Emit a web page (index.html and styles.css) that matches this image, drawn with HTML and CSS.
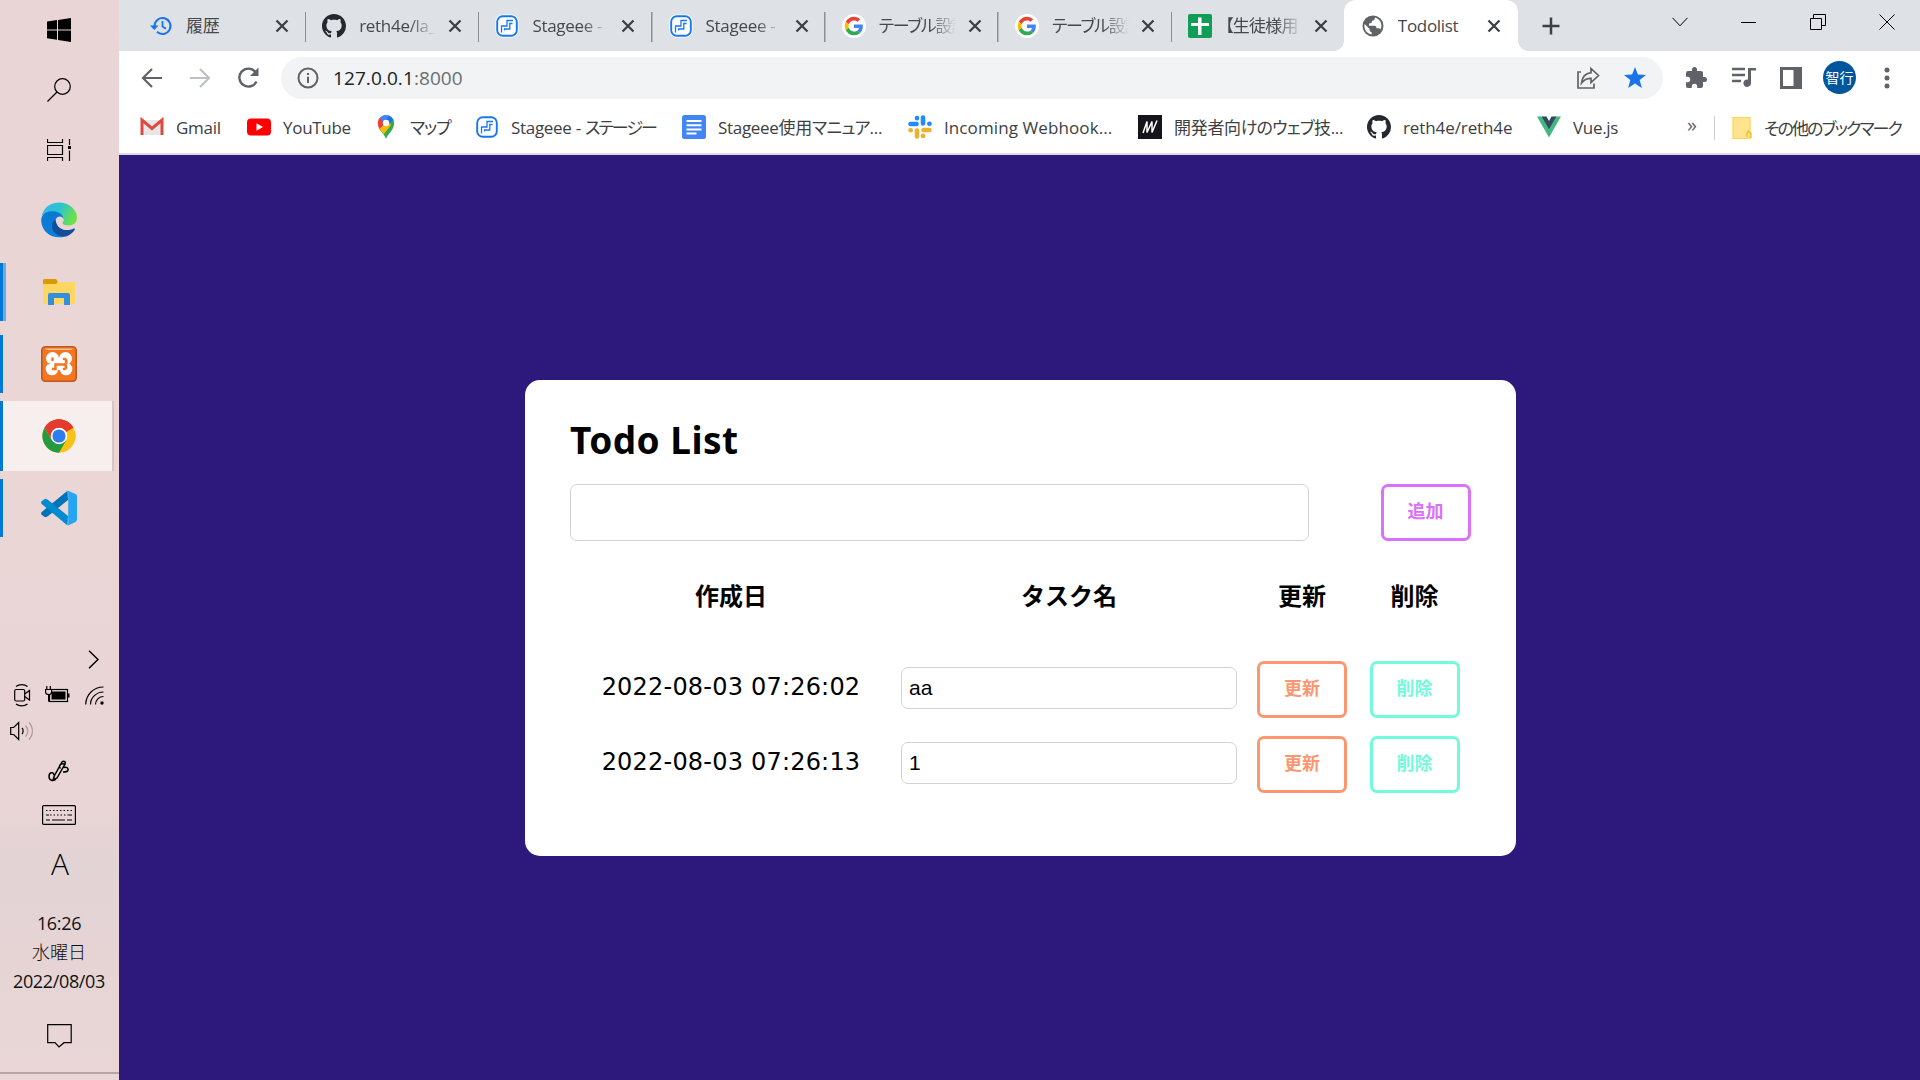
FILE: index.html
```html
<!DOCTYPE html>
<html lang="ja">
<head>
<meta charset="utf-8">
<title>Todolist</title>
<link rel="stylesheet" href="styles.css">
</head>
<body>
<svg class="defs" width="0" height="0">
  <symbol id="x" viewBox="0 0 14 14"><path d="M1.5 1.5l11 11M12.500 1.500l-11 11" stroke="#3c4043" stroke-width="2.300" fill="none"/></symbol>
  <symbol id="github" viewBox="0 0 16 16"><path fill="#24292f" d="M8 0C3.58 0 0 3.58 0 8c0 3.54 2.290 6.530 5.470 7.590.4.070.55-.17.55-.38 0-.19-.01-.82-.01-1.490-2.010.37-2.530-.49-2.690-.94-.09-.23-.48-.94-.82-1.130-.28-.15-.68-.52-.01-.53.63-.01 1.080.58 1.230.82.72 1.210 1.870.87 2.330.66.070-.52.28-.87.51-1.070-1.780-.2-3.640-.89-3.640-3.950 0-.87.31-1.590.82-2.150-.08-.2-.36-1.020.08-2.120 0 0 .67-.21 2.200.82.64-.18 1.320-.27 2-.27s1.360.09 2 .27c1.530-1.040 2.200-.82 2.200-.82.44 1.100.16 1.920.08 2.120.51.56.82 1.270.82 2.150 0 3.070-1.870 3.750-3.650 3.950.29.25.54.73.54 1.480 0 1.070-.01 1.930-.01 2.200 0 .21.15.46.55.38A8.010 8.010 0 0 0 16 8c0-4.420-3.580-8-8-8z"/></symbol>
  <symbol id="stageee" viewBox="0 0 24 24"><rect x=".5" y=".5" width="23" height="23" rx="7" fill="#fff"/><rect x="2.200" y="2.200" width="19.600" height="19.600" rx="5.500" fill="#fff" stroke="#1677f0" stroke-width="1.900"/><path d="M18 6.500h-6V12H6.500v6.500M17.500 9.500h-2.700V15H9.500v1.500" fill="none" stroke="#1677f0" stroke-width="1.300"/></symbol>
  <symbol id="google" viewBox="0 0 48 48"><circle cx="24" cy="24" r="24" fill="#fff"/><g transform="translate(5.500 5.500) scale(.77)"><path fill="#EA4335" d="M24 9.500c3.540 0 6.710 1.220 9.210 3.600l6.850-6.850C35.900 2.380 30.470 0 24 0 14.620 0 6.510 5.380 2.560 13.220l7.980 6.190C12.430 13.720 17.740 9.500 24 9.500z"/><path fill="#4285F4" d="M46.980 24.550c0-1.570-.15-3.090-.38-4.550H24v9.020h12.940c-.58 2.960-2.260 5.480-4.780 7.180l7.730 6c4.510-4.180 7.090-10.360 7.090-17.650z"/><path fill="#FBBC05" d="M10.530 28.590c-.48-1.450-.76-2.990-.76-4.590s.27-3.140.76-4.590l-7.980-6.190C.92 16.460 0 20.120 0 24s.92 7.540 2.560 10.780l7.970-6.190z"/><path fill="#34A853" d="M24 48c6.480 0 11.930-2.130 15.890-5.810l-7.730-6c-2.150 1.450-4.920 2.300-8.160 2.300-6.260 0-11.570-4.220-13.470-9.910l-7.980 6.190C6.510 42.620 14.620 48 24 48z"/></g></symbol>
</svg>

<div class="screen">
  <aside class="taskbar">
    <div class="sys"><svg width="24" height="24" viewBox="0 0 24 24"><path d="M0 3.500l10-1.400v9.300H0zM11 2l13-2v11.400H11zM0 12.400h10v9.300L0 20.300zM11 12.400h13V24l-13-2z"/></svg></div>
    <div class="sys"><svg width="24" height="24" viewBox="0 0 24 24" class="line"><circle cx="15.500" cy="8.500" r="7.800"/><path d="M10 14L.5 23.500"/></svg></div>
    <div class="sys"><svg width="24" height="22" viewBox="0 0 24 22" class="line"><path d="M.5 0v3.500h15V0M.5 6.500h15v9H.5zM.5 22v-3.500h15V22M22.500 0v6M22.500 11.500V22"/><path d="M21 7h3v3h-3z" fill="#000" stroke="none"/></svg></div>

    <div class="app first"><svg width="36" height="36" viewBox="0 0 36 36">
      <defs><linearGradient id="eg" x1="0" y1="0" x2="1" y2=".35"><stop offset=".1" stop-color="#35b5ef"/><stop offset=".55" stop-color="#2dc4cf"/><stop offset="1" stop-color="#6be04a"/></linearGradient><linearGradient id="eb" x1="0" y1="0" x2="0" y2="1"><stop offset="0" stop-color="#0c78cf"/><stop offset="1" stop-color="#0a7fde"/></linearGradient></defs>
      <path fill="url(#eg)" d="M.6 14C2.800 5.500 9.500.5 18 .5 28.500.5 36 8 36 15.500c0 5-3.500 8-8.500 8-4 0-6-1.300-6-2.500 0-.9 1.300-1.500 1.300-3.600 0-2-2-4.500-5-5C12 10 5 10 .6 14z"/>
      <path fill="url(#eb)" d="M.2 19C-.2 12 6 8.800 12 9.200c6 .3 10.500 4 10.700 7.800-1.500-3-6-4-8.200.8-2.500 6 1.500 14 9.500 16.700C12 38 .8 30.500.2 19z"/>
      <path fill="#0f4f9c" d="M14.600 17.500c-7 4-3.600 17 8.900 17.100 4.500-.5 8.500-4 10.300-7.200.4-.9-.4-1.200-1.100-.8-8.200 3.800-17.500.3-18.100-9.100z"/></svg></div>
    <div class="app run double"><svg width="34" height="28" viewBox="0 0 34 28"><path fill="#dc9a02" d="M2 1h12l2 3-2 3H1V2z"/><path fill="#ffd661" d="M1 6h13l2-2h15.500A1.500 1.500 0 0 1 33 5.500v19a1.500 1.500 0 0 1-1.500 1.500h-29A1.500 1.500 0 0 1 1 24.500z"/><path fill="#338fdc" d="M6 27V17a2 2 0 0 1 2-2h18a2 2 0 0 1 2 2v10h-6v-7H12v7z"/></svg></div>
    <div class="app run"><svg width="36" height="36" viewBox="0 0 36 36"><rect x=".8" y=".8" width="34.400" height="34.400" rx="3.500" fill="#f47622" stroke="#b95b20" stroke-width="1.600"/><path d="M4 2.500h28l-2 1.500H6z" fill="#ffc08c"/><g fill="#fff"><circle cx="11.500" cy="12.500" r="6.500"/><circle cx="24.500" cy="12.500" r="6.500"/><circle cx="11" cy="23" r="6.300"/><circle cx="25" cy="23" r="6.300"/><path d="M9 12h18v12H9z"/></g><path d="M11.500 12.500v1.500M12 23h2.500v-4.500h8.500c3 0 3.500-5.500 0-5.500M23 18.500c3 1 2.500 4.500 0 4.500" fill="none" stroke="#f47622" stroke-width="2.500" stroke-linecap="round"/><path d="M7 17.800h2" stroke="#f47622" stroke-width="1"/></svg></div>
    <div class="app run active"><svg width="34" height="34" viewBox="0 0 48 48"><circle cx="24" cy="24" r="23.500" fill="#fbc116"/><path fill="#e33b2e" d="M24 24L3.650 12.250A23.500 23.500 0 0 1 44.350 12.250z"/><path fill="#e33b2e" d="M24 12.250h20.350A23.500 23.500 0 0 0 3.650 12.250l10.170 17.600z"/><path fill="#249a41" d="M3.650 12.250A23.500 23.500 0 0 0 24 47.500l10.200-17.600L24 33 13.820 29.850z"/><circle cx="24" cy="24" r="11.700" fill="#fff"/><circle cx="24" cy="24" r="9.300" fill="#2f7ded"/></svg></div>
    <div class="app run"><svg width="36" height="36" viewBox="0 0 36 36"><path fill="#0072ba" d="M26.500.7L27 10 6.500 26.500 4 27.200.7 24.700c-.8-.8-.7-2 0-2.700z"/><path fill="#008bd0" d="M.7 11.300L4 8.800l2.500.6L27 26l-.5 9.500L.7 14c-.7-.7-.8-2 0-2.700z"/><path fill="#25a6f2" d="M26.500.5L34.500 4A2.600 2.600 0 0 1 36 6.500v23a2.600 2.600 0 0 1-1.500 2.400l-8 3.800c.5-.5.7-1 .7-2V2.500c0-.8-.2-1.500-.7-2z"/></svg></div>

    <div class="tray">
      <div class="chev"><svg width="11" height="19" viewBox="0 0 11 19" class="line mid"><path d="M1 .8l9 8.700-9 8.700"/></svg></div>
      <div class="trow">
        <svg width="17" height="24" viewBox="0 0 17 24" class="line"><rect x=".7" y="6.500" width="10" height="11.500" rx="1.500"/><path d="M10.700 11l4.800-3.500v9.500l-4.800-3.500M2 3.500c3-2.500 8.500-2.500 11.500 0M2 21c3 2.500 8.500 2.500 11.500 0"/></svg>
        <svg width="26" height="20" viewBox="0 0 26 20" class="line"><rect x="4.500" y="4.500" width="18" height="12"/><path d="M6.500 6.500h14v8h-14zM23 8.500h1.500v4H23z" fill="#000" stroke="none"/><path d="M.6 4.500h6V7c0 1.500-1 2.500-3 2.500S.6 8.500.6 7zM1.800 1v3M5.300 1v3M3.600 9.500v7" fill="#e8d4d5"/></svg>
        <svg width="19" height="19" viewBox="0 0 19 19" class="line"><path d="M.7 18.500C1 8.500 8.500 1 18.500 1M5.500 18.500C5.500 11.500 11.500 6 18.500 6M10.500 18.500c0-4.500 3.500-8 8-8"/><circle cx="17" cy="17" r="1.700" fill="#000" stroke="none"/></svg>
      </div>
      <div class="vol"><svg width="24" height="20" viewBox="0 0 24 20" class="line"><path d="M.7 6.500h3l5-5v17l-5-5h-3z"/><path d="M12 7c1.500 1.500 1.500 4.500 0 6"/><path d="M15.500 4.500c3 3 3 8 0 11M19 1.500c4.500 4.500 4.500 12.500 0 17" stroke="#a99a9b"/></svg></div>
      <div class="pen"><svg width="22" height="22" viewBox="0 0 22 22" class="line mid"><path d="M14 2c1.500-1.500 4-.5 3 2L9 18l-4 2 1.500-4.500zM6 15c-1-4-5-2.500-5 1.500s4 5 7 3M17.500 5c-4-3-8 1-5 3.500M15 12c4 0 5.500-1 5-3-.5-1.500-2-2-4.500-1.500"/></svg></div>
      <div class="kbd"><svg width="34" height="20" viewBox="0 0 34 20" class="line"><rect x=".6" y=".6" width="32.800" height="18.800" rx="1"/><path d="M4 5.500h26M8 10h19" stroke-dasharray="1.500 2"/><path d="M4 10h3M27 10h3M4 15h4M10 15h13M25 15h5"/></svg></div>
      <div class="ime">A</div>
      <div class="clock"><span>16:26</span><span class="day">水曜日</span><span>2022/08/03</span></div>
      <div class="note"><svg width="25" height="24" viewBox="0 0 25 24" class="line"><path d="M.7.700h23.500v18H17L12 23l-4-4.300H.7z"/></svg></div>
    </div>
  </aside>

  <main class="browser">
    <nav class="tabs">
      <div class="tab"><svg width="22" height="20" viewBox="0 0 22 20"><path d="M4.500 10a8 8 0 1 1 2.500 5.800" fill="none" stroke="#1a73e8" stroke-width="2"/><path d="M0 9.500h8.500L4.300 14z" fill="#1a73e8"/><path d="M12.500 5v5.500l3.500 2.200" fill="none" stroke="#1a73e8" stroke-width="1.800"/></svg><span class="name">履歴</span><svg class="x"><use href="#x"/></svg></div>
      <div class="tab"><svg width="24" height="24"><use href="#github"/></svg><span class="name fade">reth4e/la_</span><svg class="x"><use href="#x"/></svg></div>
      <div class="tab"><svg width="24" height="24"><use href="#stageee"/></svg><span class="name fade">Stageee -</span><svg class="x"><use href="#x"/></svg></div>
      <div class="tab"><svg width="24" height="24"><use href="#stageee"/></svg><span class="name fade">Stageee -</span><svg class="x"><use href="#x"/></svg></div>
      <div class="tab"><svg width="24" height="24"><use href="#google"/></svg><span class="name fade kana">テーブル設計</span><svg class="x"><use href="#x"/></svg></div>
      <div class="tab"><svg width="24" height="24"><use href="#google"/></svg><span class="name fade kana">テーブル設計</span><svg class="x"><use href="#x"/></svg></div>
      <div class="tab last"><svg width="24" height="24" viewBox="0 0 24 24"><rect width="24" height="24" rx="2" fill="#109d58"/><path d="M10 3.500h3.500V9H21v3h-7.500v9H10v-9H3V9h7z" fill="#fff"/></svg><span class="name fade paren">【生徒様用</span><svg class="x"><use href="#x"/></svg></div>
      <div class="tab current"><svg width="22" height="22" viewBox="0 0 22 22"><circle cx="11" cy="11" r="10.500" fill="#5f6368"/><path d="M13 2.500c-.2 2-.8 3-3 3.200L9.500 8 7 8.500v2.300h5.500c1.500 0 2 1.200 2 2.500h2.200c1 0 1.600.6 1.800 1.400C20.500 11 19.500 4.500 13 2.500zM2.600 9l5 5v1c0 1.200 1 2.200 2.100 2.200v2.300C5 19 1.500 14 2.600 9z" fill="#fff"/></svg><span class="name">Todolist</span><svg class="x"><use href="#x"/></svg></div>
      <div class="newtab"><svg width="18" height="18" viewBox="0 0 18 18"><path d="M9 .5v17M.5 9h17" stroke="#3c4043" stroke-width="2.500"/></svg></div>
      <div class="win">
        <svg width="16" height="10" viewBox="0 0 16 10" class="line thin"><path d="M.5.800l7.500 8 7.500-8"/></svg>
        <svg width="16" height="10" viewBox="0 0 16 10" class="line thin"><path d="M0 5.500h15"/></svg>
        <svg width="16" height="16" viewBox="0 0 16 16" class="line thin"><path d="M.5 4.500h11v11H.5zM3.500 4V.5h12v11H12"/></svg>
        <svg width="16" height="16" viewBox="0 0 16 16" class="line thin"><path d="M.5.500l15 15M15.500.500l-15 15"/></svg>
      </div>
    </nav>

    <div class="toolbar">
      <div class="nav">
        <svg width="24" height="24" viewBox="0 0 24 24" fill="none" stroke="#5f6368" stroke-width="2.200"><path d="M22 12H3.500M12 3l-9 9 9 9"/></svg>
        <svg width="24" height="24" viewBox="0 0 24 24" fill="none" stroke="#bdc0c4" stroke-width="2.200"><path d="M2 12h18.500M12 3l9 9-9 9"/></svg>
        <svg width="24" height="24" viewBox="0 0 24 24"><path d="M20.500 15.500a9 9 0 1 1-1.300-9.800" fill="none" stroke="#5f6368" stroke-width="2.400"/><path d="M22.500 1.500V10H14z" fill="#5f6368"/></svg>
      </div>
      <div class="omnibox">
        <svg width="22" height="22" viewBox="0 0 22 22"><circle cx="11" cy="11" r="9.500" fill="none" stroke="#5f6368" stroke-width="2"/><path d="M10 9.800h2V16h-2zM10 6h2v2h-2z" fill="#5f6368"/></svg>
        <span class="url">127.0.0.1<i>:8000</i></span>
        <svg class="share" width="24" height="24" viewBox="0 0 24 24" fill="none" stroke="#5f6368" stroke-width="1.700"><path d="M5 6H2v16h16v-4.500M15 2.500l7.500 7-7.500 7V12.300c-4 0-7 1.200-9.500 4.700.5-5.500 3.500-9.500 9.500-10.300z"/></svg>
        <svg width="24" height="24" viewBox="0 0 24 24"><path fill="#1a73e8" d="M12 1l2.900 7.600 8.100.4-6.300 5.100 2.100 7.900-6.800-4.400L5.200 22l2.100-7.900L1 9l8.100-.4z"/></svg>
      </div>
      <div class="tools">
        <svg width="24" height="24" viewBox="0 0 24 24"><path fill="#5f6368" d="M20.500 11H19V7a2 2 0 0 0-2-2h-4V3.500a2.500 2.500 0 0 0-5 0V5H4a2 2 0 0 0-2 2v3.800h1.500a2.700 2.700 0 0 1 0 5.400H2V20a2 2 0 0 0 2 2h3.800v-1.500a2.700 2.700 0 0 1 5.400 0V22H17a2 2 0 0 0 2-2v-4h1.500a2.500 2.500 0 0 0 0-5z"/></svg>
        <svg width="24" height="22" viewBox="0 0 24 22"><path d="M0 2h13M0 8h13M0 14h9" stroke="#5f6368" stroke-width="2.300"/><path d="M16 1h8v2.500h-5V16a3.800 3.800 0 1 1-3-3.500z" fill="#5f6368"/></svg>
        <svg width="22" height="22" viewBox="0 0 22 22"><path d="M0 0h22v22H0zM3 3v16h10.500V3z" fill="#5f6368" fill-rule="evenodd"/></svg>
        <span class="avatar">智行</span>
        <svg width="6" height="22" viewBox="0 0 6 22" fill="#5f6368"><circle cx="3" cy="3" r="2.500"/><circle cx="3" cy="11" r="2.500"/><circle cx="3" cy="19" r="2.500"/></svg>
      </div>
    </div>

    <div class="bookmarks">
      <div class="bm"><svg width="24" height="24" viewBox="0 0 24 24"><path d="M3 5h18v15H3z" fill="#e8e6e6"/><path d="M2 20V5l10 8.500L22 5v15" fill="none" stroke="#dd4b3e" stroke-width="3"/></svg><span>Gmail</span></div>
      <div class="bm"><svg width="24" height="24" viewBox="0 0 24 24"><rect y="3.500" width="24" height="17" rx="4" fill="#f00"/><path d="M9.500 8.300l6.500 3.700-6.500 3.700z" fill="#fff"/></svg><span>YouTube</span></div>
      <div class="bm"><svg width="24" height="24" viewBox="0 0 24 24"><path fill="#34a853" d="M12 24c1-4 8.200-9 8.200-16 0-1.500-.4-2.800-1-4L5.500 14.500C8 17.500 11 20.500 12 24z"/><path fill="#fbbc04" d="M5.500 14.500L14 5l3 5-7 9z"/><path fill="#ea4335" d="M3.800 8c0 2.300.6 4.300 1.900 6.300L13 6 5.800 2.800C4.500 4.200 3.800 6 3.800 8z"/><path fill="#4285f4" d="M5.800 2.700a8.200 8.200 0 0 1 8.500-2.400L9.500 7z"/><path fill="#1a73e8" d="M14.300.3a8 8 0 0 1 5 3.900L14.500 10 10 6z"/><circle cx="12" cy="8" r="3.200" fill="#fff"/></svg><span class="kana">マップ</span></div>
      <div class="bm"><svg width="24" height="24"><use href="#stageee"/></svg><span>Stageee - <b class="kana tight">ステージー</b></span></div>
      <div class="bm"><svg width="24" height="24" viewBox="0 0 24 24"><rect width="24" height="24" rx="2.500" fill="#4285f4"/><path d="M4.500 6h15M4.500 10.200h15M4.500 14.400h15M4.500 18.600h10" stroke="#fff" stroke-width="2"/></svg><span>Stageee使用<b class="kana wide">マニュア</b>...</span></div>
      <div class="bm"><svg width="24" height="24" viewBox="0 0 24 24" stroke-linecap="round" stroke-width="4.600"><path d="M2.500 9h6M9 3v.2M15 2.500v6M21.500 8.800h-.2" stroke="#1e8cff"/><path d="M15.500 15h6M15 21v-.2M9 15.500v6M2.500 15.200h.2" stroke="#ecb22e"/></svg><span class="hook">Incoming Webhook...</span></div>
      <div class="bm"><svg width="24" height="24" viewBox="0 0 24 24"><path fill="#15141a" d="M0 0h24v24H0z"/><path d="M5 18L9 6.500v11l5-11v11l5-12" fill="none" stroke="#fff" stroke-width="1.500"/></svg><span>開発者向<b class="kana wide">けのウェブ</b>技...</span></div>
      <div class="bm"><svg width="24" height="24"><use href="#github"/></svg><span class="gh">reth4e/reth4e</span></div>
      <div class="bm"><svg width="24" height="24" viewBox="0 0 24 24"><path fill="#41b883" d="M0 1.500h6L12 12l6-10.500h6L12 22.500z"/><path fill="#35495e" d="M4.700 1.500H9.500L12 6l2.500-4.500h4.800L12 14.200z"/></svg><span>Vue.js</span></div>
      <div class="more">»</div>
      <div class="bm other"><svg width="20" height="24" viewBox="0 0 20 24"><path d="M1 1.500h17v14l1 1.500v5h-2.500v.5H1z" fill="#ffe48d" stroke="#fdd24e" stroke-width="1.200"/><path d="M15 21v-4l1.500-2 2 2v5" fill="none" stroke="#f0be2d" stroke-width="1.500"/></svg><span class="kana tight">その他のブックマーク</span></div>
    </div>

    <section class="page">
      <div class="card">
        <h1>Todo List</h1>
        <div class="add"><input class="new" type="text"><button class="btn pink">追加</button></div>
        <div class="grid head"><span>作成日</span><span>タスク名</span><span>更新</span><span>削除</span></div>
        <div class="grid row"><time>2022-08-03 07:26:02</time><input type="text" value="aa"><button class="btn orange">更新</button><button class="btn mint">削除</button></div>
        <div class="grid row"><time>2022-08-03 07:26:13</time><input type="text" value="1"><button class="btn orange">更新</button><button class="btn mint">削除</button></div>
      </div>
    </section>
  </main>
</div>
</body>
</html>
```
FILE: styles.css
```css
* { box-sizing: border-box; }
body { margin: 0; overflow: hidden; font-family: "Open Sans", "Noto Sans CJK JP", sans-serif; }
.defs { position: absolute; }
svg { flex: none; display: block; }
.screen { display: flex; width: 1920px; height: 1080px; }
.line { fill: none; stroke: #000; stroke-width: 1.2; }
.line.mid { stroke-width: 1.5; }
.line.thin { stroke-width: 1; }

/* desktop taskbar */
.taskbar {
  width: 119px; flex: none; display: flex; flex-direction: column;
  background: linear-gradient(#ead5d6 0, #ebd6d6 45%, #e9d5d6 75%, #e2d3d4 80%, #e6d4d5 88%, #ead6d6 100%);
}
.sys { height: 60px; padding-left: 47px; display: flex; align-items: center; }
.app { height: 72px; width: 118px; display: flex; align-items: center; justify-content: center; }
.app.first { margin-top: 4px; }
.app.run { background: linear-gradient(#0078d7, #0078d7) 0 7px / 3px 58px no-repeat; }
.app.double { background: linear-gradient(90deg, #0078d7 3px, #66aee5 3px) 0 7px / 6px 58px no-repeat; }
.app.active {
  height: 70px; margin: 1px 0;
  background: linear-gradient(90deg, #0078d7 3px, #f7eeee 3px, #f7eeee 112px, #d9c3c5 112px, #d9c3c5 114px, transparent 114px);
}
.tray { margin-top: 106px; height: 424px; display: flex; flex-direction: column; border-bottom: 2px solid #b5a5a6; }
.chev { height: 19px; padding-left: 88px; }
.trow { display: flex; align-items: center; gap: 14px; padding-left: 14px; height: 24px; margin-top: 14px; }
.vol { padding-left: 10px; margin-top: 14px; }
.pen { padding-left: 48px; margin-top: 19px; }
.kbd { padding-left: 42px; margin-top: 23px; }
.ime { height: 40px; margin-top: 19px; padding-left: 1px; text-align: center; font: 300 30px/40px "Open Sans", sans-serif; }
.clock { display: flex; flex-direction: column; align-items: center; width: 118px; margin-top: 25px; font-size: 18px; line-height: 29px; letter-spacing: -.35px; color: #111; }
.day { font-weight: 300; letter-spacing: 0; }
.note { padding-left: 47px; margin-top: 28px; }

/* browser window */
.browser { flex: 1; min-width: 0; display: flex; flex-direction: column; background: #fff; }
.tabs { height: 51px; display: flex; background: #dee1e6; padding-left: 14px; }
.tab { width: 173.2px; flex: none; display: flex; align-items: center; padding: 1px 16px 0; background: linear-gradient(#8c9096, #8c9096) 100% 12px / 1.500px 30px no-repeat; }
.tab > svg:first-child { width: 24px; }
.tab.last { background: none; }
.name { width: 77px; margin-left: 13px; flex: none; overflow: hidden; white-space: nowrap; font-size: 17px; line-height: 30px; letter-spacing: -.3px; color: #45484c; }
.tab .fade { -webkit-mask-image: linear-gradient(90deg, #000 65%, transparent); mask-image: linear-gradient(90deg, #000 65%, transparent); }
.tab .x { width: 14px; height: 14px; margin-left: 12px; }
.tab.current { position: relative; width: 174px; padding-left: 17px; background: #fff; border-radius: 12px 12px 0 0; margin-left: -1.500px; }
.tab.current::before, .tab.current::after { content: ""; position: absolute; bottom: 0; width: 10px; height: 10px; }
.tab.current::before { right: 100%; background: radial-gradient(circle at 0 0, transparent 9.500px, #fff 10px); }
.tab.current::after { left: 100%; background: radial-gradient(circle at 100% 0, transparent 9.500px, #fff 10px); }
.kana { font-feature-settings: "palt"; font-weight: normal; letter-spacing: -1.300px; }
.kana.tight { letter-spacing: -1.900px; }
.kana.wide { letter-spacing: -.8px; }
.paren { font-feature-settings: "palt"; letter-spacing: -.8px; }
.newtab { width: 66px; display: flex; align-items: center; justify-content: center; }
.win { flex: 1; display: flex; align-items: center; gap: 53px; padding: 0 0 8px 88px; }
.toolbar { height: 53px; display: flex; align-items: center; padding-left: 21px; }
.nav { display: flex; gap: 24px; }
.omnibox { height: 42px; width: 1382px; margin: 0 0 0 21px; border-radius: 21px; background: #f1f3f4; display: flex; align-items: center; padding: 0 16px; }
.url { margin-left: 14px; font-size: 19px; letter-spacing: .08px; color: #202124; }
.url i { font-style: normal; color: #6a6e73; }
.share { margin-left: auto; margin-right: 23px; }
.tools { display: flex; align-items: center; padding-left: 21px; gap: 24px; }
.avatar { width: 33px; height: 33px; border-radius: 50%; margin: 0 4px 0 -3px; background: #00569d; color: #fff; font: 14px/32px "Noto Sans CJK JP", sans-serif; text-align: center; }
.bookmarks {
  height: 51px; border-bottom: 2px solid #dadce0; padding-left: 21px; display: grid; align-items: center;
  grid-template-columns: 107px 127px 101px 207px 226px 230px 229px 170px 146px 31px 1fr;
}
.bm { display: flex; align-items: center; gap: 12px; white-space: nowrap; font-size: 17px; letter-spacing: -.3px; color: #3c4043; padding-bottom: 3px; }
.bm span { line-height: 24px; padding-top: 2px; }
.bm b { font-weight: normal; }
.bm .hook { letter-spacing: .1px; }
.bm .gh { letter-spacing: -.1px; }
.more { font-size: 20px; color: #5f6368; line-height: 24px; padding: 0 0 8px 4px; }
.other { border-left: 1px solid #c8cbcf; padding: 0 0 0 17px; height: 24px; margin-bottom: 2px; }

/* todo page */
.page { flex: 1; background: #2d197c; display: flex; flex-direction: column; align-items: center; padding: 225px 0 0 1px; }
.card { width: 991px; height: 476px; background: #fff; border-radius: 15px; padding: 0 45px 0 45.500px; font-family: "DejaVu Sans", "Noto Sans CJK JP", sans-serif; color: #000; }
h1 { margin: 0; height: 104px; padding-top: 8px; font: bold 37px/104px "Noto Sans", sans-serif; letter-spacing: .45px; }
.add { display: flex; justify-content: space-between; height: 57px; }
input { height: 42px; border: 1.500px solid #d3d3d3; border-radius: 7px; padding: 0 7px; background: #fff; color: #000; font: 21px "Liberation Sans", Arial, sans-serif; outline: 0; }
.new { width: 739px; height: 57px; }
.btn { width: 90px; height: 57px; border: 3px solid; border-radius: 7px; background: #fff; padding: 0 0 6px; font: bold 18px "Noto Sans CJK JP", sans-serif; }
.pink { color: #dc70fa; }
.orange { color: #fa9770; }
.mint { color: #71fadc; }
.grid { display: grid; grid-template-columns: 322px 354px 112px 113px; align-items: center; justify-items: center; }
.head { height: 111px; padding-bottom: 5px; font: bold 24px "Noto Sans CJK JP", sans-serif; }
.row { height: 75px; }
.row time { font-size: 24px; letter-spacing: .2px; padding-bottom: 5px; }
.row input { width: 336px; margin-bottom: 3px; }
```
